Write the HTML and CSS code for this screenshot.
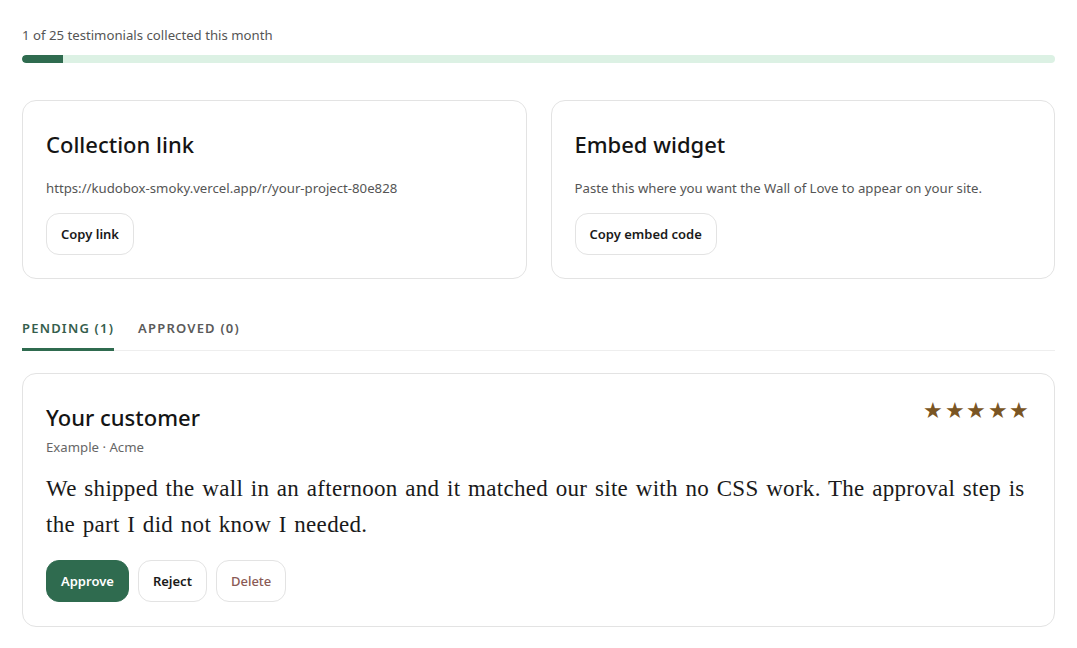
FILE: index.html
```html
<!DOCTYPE html>
<html lang="en">
<head>
<meta charset="utf-8">
<title>Dashboard</title>
<link rel="stylesheet" href="styles.css">
</head>
<body>
<main class="page">
  <section class="quota">
    <p class="quota-text">1 of 25 testimonials collected this month</p>
    <div class="bar"><div class="bar-fill" style="width:4%"></div></div>
  </section>

  <section class="cards">
    <div class="card">
      <h2 class="card-title">Collection link</h2>
      <p class="card-text">https://kudobox-smoky.vercel.app/r/your-project-80e828</p>
      <button class="btn">Copy link</button>
    </div>
    <div class="card">
      <h2 class="card-title">Embed widget</h2>
      <p class="card-text">Paste this where you want the Wall of Love to appear on your site.</p>
      <button class="btn">Copy embed code</button>
    </div>
  </section>

  <nav class="tabs">
    <span class="tab tab-active">Pending (1)</span>
    <span class="tab">Approved (0)</span>
  </nav>

  <article class="review">
    <div class="review-head">
      <div>
        <h3 class="review-name">Your customer</h3>
        <p class="review-meta">Example · Acme</p>
      </div>
      <div class="stars">★★★★★</div>
    </div>
    <p class="review-quote">We shipped the wall in an afternoon and it matched our site with no CSS work. The approval step is the part I did not know I needed.</p>
    <div class="actions">
      <button class="btn btn-primary">Approve</button>
      <button class="btn">Reject</button>
      <button class="btn btn-danger">Delete</button>
    </div>
  </article>
</main>
</body>
</html>
```

FILE: styles.css
```css
* { box-sizing: border-box; }
html, body { margin: 0; background: #ffffff; }
body {
  font-family: "Noto Sans", "Open Sans", sans-serif;
  color: #1a1a1a;
}
.page {
  padding: 26px 22px 22px 22px;
}
.quota-text {
  margin: 0;
  font-size: 13.2px;
  line-height: 18px;
  color: #555555;
}
.bar {
  margin-top: 11px;
  height: 8px;
  border-radius: 4px;
  background: #dcf1e4;
  overflow: hidden;
}
.bar-fill {
  height: 100%;
  background: #2f6b4f;
  border-radius: 4px 0 0 4px;
}
.cards {
  margin-top: 37px;
  display: grid;
  grid-template-columns: 1fr 1fr;
  gap: 24px;
}
.card {
  border: 1px solid #e3e3e3;
  border-radius: 14px;
  padding: 27px 23px 23px 23px;
}
.card-title {
  margin: 0;
  font-size: 22px;
  line-height: 32px;
  font-weight: 500;
  color: #141414;
}
.card-text {
  margin: 19px 0 16px 0;
  font-size: 13.2px;
  line-height: 18px;
  color: #555555;
}
.btn {
  font-family: "Noto Sans", "Open Sans", sans-serif;
  font-size: 13px;
  font-weight: 600;
  color: #1a1a1a;
  background: #ffffff;
  border: 1px solid #e3e3e3;
  border-radius: 13px;
  height: 42px;
  padding: 0 14px;
  cursor: pointer;
}
.tabs {
  margin-top: 38px;
  display: flex;
  gap: 24px;
  border-bottom: 1px solid #eeeeee;
}
.tab {
  font-size: 13px;
  font-weight: 600;
  letter-spacing: 1.2px;
  text-transform: uppercase;
  color: #5a5a5a;
  padding: 2px 0 11px 0;
  border-bottom: 3px solid transparent;
  margin-bottom: -1px;
}
.tab-active {
  color: #355e4d;
  border-bottom-color: #2f6b4f;
}
.review {
  margin-top: 22px;
  border: 1px solid #e3e3e3;
  border-radius: 14px;
  padding: 27px 23px 24px 23px;
}
.review-head {
  display: flex;
  justify-content: space-between;
  align-items: flex-start;
}
.review-name {
  margin: 0;
  font-size: 22px;
  line-height: 32px;
  font-weight: 500;
  color: #141414;
}
.review-meta {
  margin: 5px 0 0 0;
  font-size: 13.2px;
  line-height: 18px;
  color: #666666;
}
.stars {
  color: #7a5523;
  font-size: 22px;
  letter-spacing: 1.6px;
  line-height: 16px;
  margin-right: 0;
}
.review-quote {
  margin: 15px 0 17px 0;
  font-family: "Liberation Serif", "DejaVu Serif", serif;
  font-size: 23px;
  letter-spacing: 0.3px;
  word-spacing: 1.6px;
  line-height: 36px;
  color: #1a1a1a;
}
.actions {
  display: flex;
  gap: 9px;
}
.btn-primary {
  background: #2f6b4f;
  border-color: #2f6b4f;
  color: #ffffff;
}
.btn-danger {
  color: #8a5a55;
  font-weight: 500;
}
```
